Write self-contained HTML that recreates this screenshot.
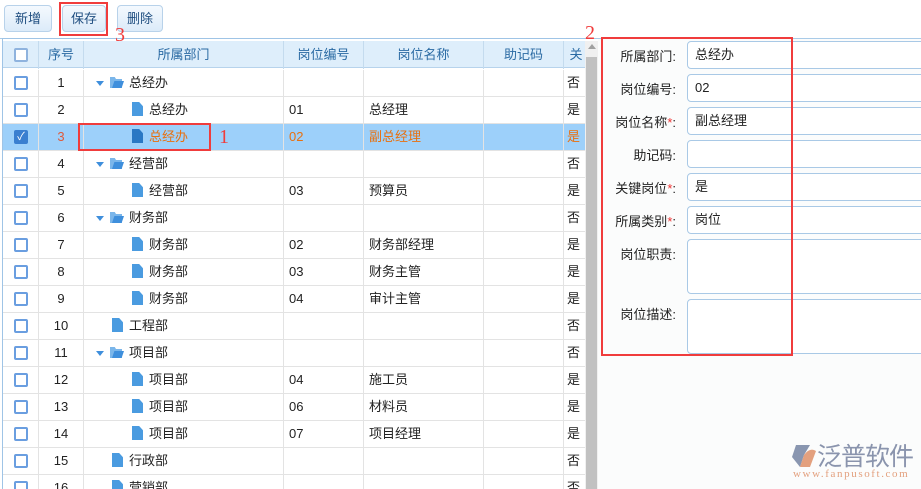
<!DOCTYPE html>
<html><head><meta charset="utf-8"><style>
*{box-sizing:border-box;margin:0;padding:0}
body{width:921px;height:489px;overflow:hidden;background:#fff;font-family:"Liberation Sans","Noto Sans CJK SC",sans-serif;font-size:13px;color:#222;position:relative}
.btn{position:absolute;top:5px;height:27px;border:1px solid #b8d2ea;border-radius:4px;background:linear-gradient(#f4f9fe,#dcebf9);color:#1f4e80;font-size:13px;line-height:25px;text-align:center}
.red{position:absolute;border:2px solid #f03c3c;z-index:5}
.num{position:absolute;color:#f03c3c;font-family:"Liberation Serif",serif;font-size:20px;z-index:5}
.grid{position:absolute;left:2px;top:38px;width:584px;height:451px;border-left:1px solid #9fc4e6;border-top:1px solid #9fc4e6;overflow:hidden}
.row{position:absolute;left:0;height:27px;width:583px;border-bottom:1px solid #e3e3e3;background:#fff}
.row div{position:absolute;top:0;height:26px;line-height:26px;border-right:1px solid #e3e3e3;white-space:nowrap;overflow:hidden}
.hd{background:#deeefb;border-bottom:1px solid #b7d3ec}
.hd div{border-right:1px solid #c4dbee;color:#2a6aa3;text-align:center;line-height:28px;height:28px}
.sel{background:#9dd0fa}
.sel div{color:#e8700f}
.c0{left:0;width:36px}.c1{left:36px;width:45px;text-align:center}.c2{left:81px;width:200px}.c3{left:281px;width:80px;padding-left:5px}.c4{left:361px;width:120px;padding-left:5px}.c5{left:481px;width:80px}.c6{left:561px;width:22px;padding-left:3px}
.cb{position:absolute;left:11px;top:6px;width:14px;height:14px;border:2px solid #6a9ee0;border-radius:2px;background:#fff}
.f{display:inline-block;vertical-align:-2px;width:11px;height:14px;background:#4a9be0;clip-path:polygon(0 0,65% 0,100% 30%,100% 100%,0 100%);margin-right:6px}
.fd{display:inline-block;vertical-align:-1px;width:14px;height:11px;margin-right:5px;position:relative}
.fd:before{content:"";position:absolute;left:0;top:0;width:12px;height:11px;background:#7bb6ea;clip-path:polygon(0 0,40% 0,50% 18%,100% 18%,100% 100%,0 100%)}
.fd:after{content:"";position:absolute;left:2px;top:4px;width:12px;height:7px;background:#3f8fdc;clip-path:polygon(20% 0,100% 0,80% 100%,0 100%)}
.tri{display:inline-block;width:0;height:0;border-left:4px solid transparent;border-right:4px solid transparent;border-top:5px solid #3f8fdc;margin:0 6px 1px 12px;vertical-align:middle}
.l1{padding-left:28px}.l2{padding-left:48px}
.lbl{position:absolute;left:600px;width:76px;text-align:right;font-size:13px;color:#222}
.inp{position:absolute;left:687px;width:250px;border:1px solid #a9c9e6;border-radius:4px 0 0 4px;padding-left:7px;font-size:13px;background:#fff}
.st{color:#e33}
</style></head><body>
<div style="position:absolute;left:598px;top:39px;width:323px;height:450px;background:#fbfcfc"></div>
<div class="btn" style="left:4px;width:48px">新增</div>
<div class="btn" style="left:62px;width:44px">保存</div>
<div class="btn" style="left:117px;width:46px">删除</div>
<div class="red" style="left:59px;top:2px;width:49px;height:34px"></div>
<div class="num" style="left:115px;top:24px">3</div>
<div style="position:absolute;left:0;top:38px;width:921px;height:1px;background:#a9cbe8"></div>
<div class="grid">
<div class="row hd" style="top:2px"><div class="c0"><span class="cb" style="top:7px;border-color:#8fb3de"></span></div><div class="c1">序号</div><div class="c2" style="text-align:center">所属部门</div><div class="c3" style="padding:0;text-align:center">岗位编号</div><div class="c4" style="padding:0;text-align:center">岗位名称</div><div class="c5">助记码</div><div class="c6">关</div></div>
<div class="row" style="top:31px"><div class="c0"><span class="cb"></span></div><div class="c1">1</div><div class="c2"><span class="tri"></span><span class="fd"></span>总经办</div><div class="c3"></div><div class="c4"></div><div class="c5"></div><div class="c6">否</div></div>
<div class="row" style="top:58px"><div class="c0"><span class="cb"></span></div><div class="c1">2</div><div class="c2 l2"><span class="f"></span>总经办</div><div class="c3">01</div><div class="c4">总经理</div><div class="c5"></div><div class="c6">是</div></div>
<div class="row sel" style="top:85px"><div class="c0"><span class="cb" style="background:#3a7fd0;border-color:#3a7fd0;color:#fff;font-size:11px;line-height:10px;text-align:center">✓</span></div><div class="c1" style="color:#e05a3a">3</div><div class="c2 l2"><span class="f" style="background:#2a78c4"></span>总经办</div><div class="c3">02</div><div class="c4">副总经理</div><div class="c5"></div><div class="c6">是</div></div>
<div class="row" style="top:112px"><div class="c0"><span class="cb"></span></div><div class="c1">4</div><div class="c2"><span class="tri"></span><span class="fd"></span>经营部</div><div class="c3"></div><div class="c4"></div><div class="c5"></div><div class="c6">否</div></div>
<div class="row" style="top:139px"><div class="c0"><span class="cb"></span></div><div class="c1">5</div><div class="c2 l2"><span class="f"></span>经营部</div><div class="c3">03</div><div class="c4">预算员</div><div class="c5"></div><div class="c6">是</div></div>
<div class="row" style="top:166px"><div class="c0"><span class="cb"></span></div><div class="c1">6</div><div class="c2"><span class="tri"></span><span class="fd"></span>财务部</div><div class="c3"></div><div class="c4"></div><div class="c5"></div><div class="c6">否</div></div>
<div class="row" style="top:193px"><div class="c0"><span class="cb"></span></div><div class="c1">7</div><div class="c2 l2"><span class="f"></span>财务部</div><div class="c3">02</div><div class="c4">财务部经理</div><div class="c5"></div><div class="c6">是</div></div>
<div class="row" style="top:220px"><div class="c0"><span class="cb"></span></div><div class="c1">8</div><div class="c2 l2"><span class="f"></span>财务部</div><div class="c3">03</div><div class="c4">财务主管</div><div class="c5"></div><div class="c6">是</div></div>
<div class="row" style="top:247px"><div class="c0"><span class="cb"></span></div><div class="c1">9</div><div class="c2 l2"><span class="f"></span>财务部</div><div class="c3">04</div><div class="c4">审计主管</div><div class="c5"></div><div class="c6">是</div></div>
<div class="row" style="top:274px"><div class="c0"><span class="cb"></span></div><div class="c1">10</div><div class="c2 l1"><span class="f"></span>工程部</div><div class="c3"></div><div class="c4"></div><div class="c5"></div><div class="c6">否</div></div>
<div class="row" style="top:301px"><div class="c0"><span class="cb"></span></div><div class="c1">11</div><div class="c2"><span class="tri"></span><span class="fd"></span>项目部</div><div class="c3"></div><div class="c4"></div><div class="c5"></div><div class="c6">否</div></div>
<div class="row" style="top:328px"><div class="c0"><span class="cb"></span></div><div class="c1">12</div><div class="c2 l2"><span class="f"></span>项目部</div><div class="c3">04</div><div class="c4">施工员</div><div class="c5"></div><div class="c6">是</div></div>
<div class="row" style="top:355px"><div class="c0"><span class="cb"></span></div><div class="c1">13</div><div class="c2 l2"><span class="f"></span>项目部</div><div class="c3">06</div><div class="c4">材料员</div><div class="c5"></div><div class="c6">是</div></div>
<div class="row" style="top:382px"><div class="c0"><span class="cb"></span></div><div class="c1">14</div><div class="c2 l2"><span class="f"></span>项目部</div><div class="c3">07</div><div class="c4">项目经理</div><div class="c5"></div><div class="c6">是</div></div>
<div class="row" style="top:409px"><div class="c0"><span class="cb"></span></div><div class="c1">15</div><div class="c2 l1"><span class="f"></span>行政部</div><div class="c3"></div><div class="c4"></div><div class="c5"></div><div class="c6">否</div></div>
<div class="row" style="top:436px"><div class="c0"><span class="cb"></span></div><div class="c1">16</div><div class="c2 l1"><span class="f"></span>营销部</div><div class="c3"></div><div class="c4"></div><div class="c5"></div><div class="c6">否</div></div>
</div>
<div style="position:absolute;left:585px;top:41px;width:13px;height:448px;background:#f0f0f0"></div>
<div style="position:absolute;left:588px;top:44px;width:0;height:0;border-left:4px solid transparent;border-right:4px solid transparent;border-bottom:5px solid #a0a0a0"></div>
<div style="position:absolute;left:586px;top:57px;width:11px;height:432px;background:#c1c1c1"></div>
<div class="red" style="left:78px;top:123px;width:133px;height:28px"></div>
<div class="num" style="left:219px;top:126px">1</div>
<div class="num" style="left:585px;top:22px">2</div>
<div class="red" style="left:601px;top:37px;width:192px;height:319px"></div>
<div class="lbl" style="top:46px">所属部门:</div><div class="inp" style="top:41px;height:28px;line-height:26px">总经办</div>
<div class="lbl" style="top:79px">岗位编号:</div><div class="inp" style="top:74px;height:28px;line-height:26px">02</div>
<div class="lbl" style="top:112px">岗位名称<span class="st">*</span>:</div><div class="inp" style="top:107px;height:28px;line-height:26px">副总经理</div>
<div class="lbl" style="top:145px">助记码:</div><div class="inp" style="top:140px;height:28px"></div>
<div class="lbl" style="top:178px">关键岗位<span class="st">*</span>:</div><div class="inp" style="top:173px;height:28px;line-height:26px">是</div>
<div class="lbl" style="top:211px">所属类别<span class="st">*</span>:</div><div class="inp" style="top:206px;height:28px;line-height:26px">岗位</div>
<div class="lbl" style="top:244px">岗位职责:</div><div class="inp" style="top:239px;height:55px"></div>
<div class="lbl" style="top:304px">岗位描述:</div><div class="inp" style="top:299px;height:55px"></div>
<svg style="position:absolute;left:790px;top:443px" width="28" height="26"><path d="M6 2 L20 2 L14 12 L10 24 L2 14 Z" fill="#8996b0"/><path d="M14 12 Q20 4 26 8 L20 24 L10 24 Z" fill="#e3a07e"/></svg>
<div style="position:absolute;left:817px;top:440px;font-size:25px;color:#8a94ad;letter-spacing:-1px;font-family:'Noto Sans CJK SC',sans-serif;line-height:30px">泛普软件</div>
<div style="position:absolute;left:793px;top:468px;font-size:11px;color:#e3a07e;font-family:'Liberation Serif',serif;letter-spacing:1.6px">www.fanpusoft.com</div>
</body></html>
